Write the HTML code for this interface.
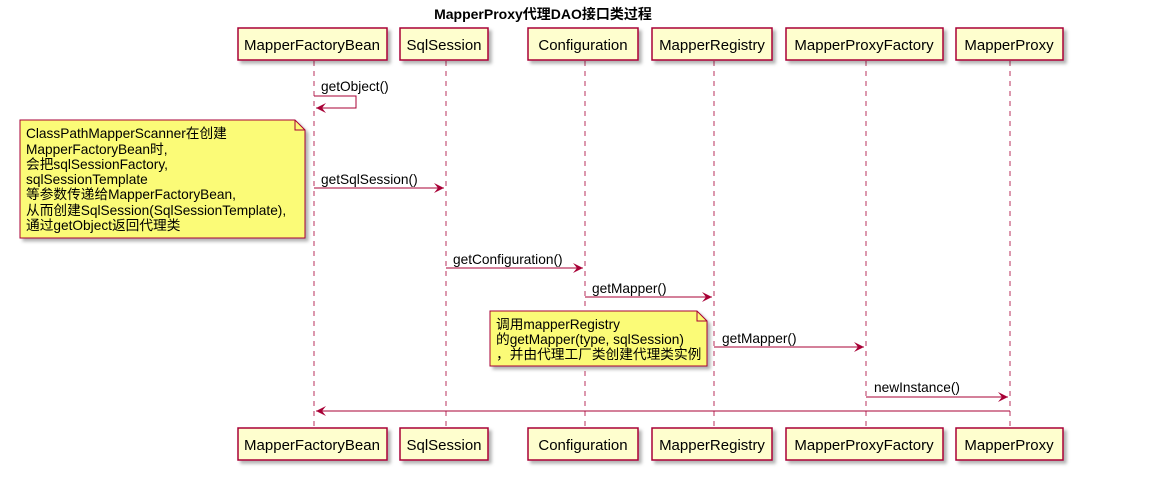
<!DOCTYPE html>
<html><head><meta charset="utf-8"><style>body{margin:0;background:#fff}svg{display:block}text{font-family:"Liberation Sans","Noto Sans CJK SC",sans-serif;font-size:13.7px;fill:#000}</style></head><body>
<svg width="1152" height="481" viewBox="0 0 1152 481">
<defs><filter id="s" x="-10%" y="-10%" width="130%" height="140%"><feDropShadow dx="3" dy="3" stdDeviation="1.5" flood-color="#000" flood-opacity="0.3"/></filter>
<marker id="a" markerWidth="12" markerHeight="10" refX="10" refY="5" orient="auto" markerUnits="userSpaceOnUse"><path d="M0,0 L10,5 L0,10 L4,5 Z" fill="#A80036"/></marker></defs>
<text x="543" y="19" text-anchor="middle" font-weight="bold" style="font-size:14px">MapperProxy代理DAO接口类过程</text>
<g stroke="#A80036" stroke-dasharray="5,5" stroke-width="1" opacity="0.8">
<line x1="314" y1="61" x2="314" y2="428"/><line x1="446" y1="61" x2="446" y2="428"/><line x1="585" y1="61" x2="585" y2="428"/><line x1="714" y1="61" x2="714" y2="428"/><line x1="866" y1="61" x2="866" y2="428"/><line x1="1010" y1="61" x2="1010" y2="428"/></g>
<g fill="#FEFECE" stroke="#A80036" stroke-width="1.5" filter="url(#s)">
<rect x="238" y="28" width="149" height="32"/><rect x="400" y="28" width="88" height="32"/><rect x="528" y="28" width="110" height="32"/><rect x="652" y="28" width="120" height="32"/><rect x="786" y="28" width="157" height="32"/><rect x="956" y="28" width="107" height="32"/>
<rect x="238" y="428" width="149" height="32"/><rect x="400" y="428" width="88" height="32"/><rect x="528" y="428" width="110" height="32"/><rect x="652" y="428" width="120" height="32"/><rect x="786" y="428" width="157" height="32"/><rect x="956" y="428" width="107" height="32"/></g>
<g text-anchor="middle">
<text x="312" y="50" style="font-size:15px">MapperFactoryBean</text><text x="444" y="50" style="font-size:15px">SqlSession</text><text x="583" y="50" style="font-size:15px">Configuration</text><text x="712" y="50" style="font-size:15px">MapperRegistry</text><text x="864" y="50" style="font-size:15px">MapperProxyFactory</text><text x="1009" y="50" style="font-size:15px">MapperProxy</text>
<text x="312" y="450" style="font-size:15px">MapperFactoryBean</text><text x="444" y="450" style="font-size:15px">SqlSession</text><text x="583" y="450" style="font-size:15px">Configuration</text><text x="712" y="450" style="font-size:15px">MapperRegistry</text><text x="864" y="450" style="font-size:15px">MapperProxyFactory</text><text x="1009" y="450" style="font-size:15px">MapperProxy</text></g>
<g stroke="#A80036" fill="none" stroke-width="1">
<polyline points="314,96 356,96 356,108 316,108" marker-end="url(#a)"/>
<line x1="314" y1="188" x2="444" y2="188" marker-end="url(#a)"/>
<line x1="446" y1="268" x2="583" y2="268" marker-end="url(#a)"/>
<line x1="585" y1="297" x2="712" y2="297" marker-end="url(#a)"/>
<line x1="714" y1="347" x2="864" y2="347" marker-end="url(#a)"/>
<line x1="866" y1="397" x2="1008" y2="397" marker-end="url(#a)"/>
<line x1="1010" y1="411" x2="316" y2="411" marker-end="url(#a)"/></g>
<text x="321" y="91">getObject()</text><text x="321" y="184">getSqlSession()</text><text x="453" y="264">getConfiguration()</text><text x="592" y="293">getMapper()</text><text x="722" y="343">getMapper()</text><text x="874" y="392">newInstance()</text>
<g filter="url(#s)" stroke="#A80036" stroke-width="1">
<path d="M20,120 H295 L305,130 V238 H20 Z" fill="#FBFB77"/><path d="M295,120 V130 H305" fill="none"/>
<path d="M490,311 H697 L707,321 V366 H490 Z" fill="#FBFB77"/><path d="M697,311 V321 H707" fill="none"/></g>
<g><text x="26" y="138">ClassPathMapperScanner在创建</text><text x="26" y="154">MapperFactoryBean时,</text><text x="26" y="169">会把sqlSessionFactory,</text><text x="26" y="184">sqlSessionTemplate</text><text x="26" y="199">等参数传递给MapperFactoryBean,</text><text x="26" y="215">从而创建SqlSession(SqlSessionTemplate),</text><text x="26" y="230">通过getObject返回代理类</text>
<text x="496" y="329">调用mapperRegistry</text><text x="496" y="344">的getMapper(type, sqlSession)</text><text x="496" y="359">，并由代理工厂类创建代理类实例</text></g>
</svg></body></html>
